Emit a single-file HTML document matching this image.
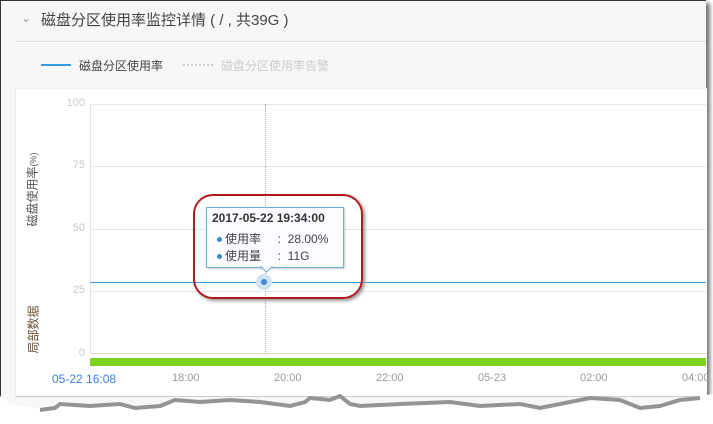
<!DOCTYPE html>
<html><head><meta charset="utf-8"><style>
body{margin:0;width:713px;height:424px;background:#fff;overflow:hidden;font-family:"Liberation Sans","Noto Sans CJK SC",sans-serif;position:relative}
.frame{position:absolute;left:0;top:0;width:705px;height:410px;background:#f7f7f7;border-left:1px solid #333;border-top:1px solid #333;box-shadow:4px 3px 4px #777}
.abs{position:absolute}
.t{font-size:13px;color:#444;white-space:nowrap}
.g{position:absolute;left:89px;width:616px;height:1px;background:#e6e6e6}
.yl{position:absolute;left:50px;width:34px;text-align:right;font-size:11px;color:#c8c8c8}
.xl{position:absolute;top:371px;font-size:11px;color:#999}
</style></head><body>
<div class="frame">
<div class="abs t" style="left:20px;top:10px;color:#999;font-size:12px">&#8964;</div>
<div class="abs t" style="left:40px;top:8px;font-size:15px;color:#444">磁盘分区使用率监控详情 ( / , 共39G )</div>
<div class="abs" style="left:14px;top:40px;width:691px;height:1px;background:#ddd"></div>
<div class="abs" style="left:40px;top:63px;width:30px;height:2px;background:#3a9ae0"></div>
<div class="abs t" style="left:78px;top:56px;font-size:12px;color:#444">磁盘分区使用率</div>
<div class="abs" style="left:182px;top:63px;width:30px;border-top:2px dotted #ccc"></div>
<div class="abs t" style="left:220px;top:56px;font-size:12px;color:#ccc">磁盘分区使用率告警</div>
<div class="abs" style="left:14px;top:87px;width:691px;height:307px;background:#fff;border-top:1px solid #eee;border-left:1px solid #eee;border-bottom:1px solid #ccc"></div>
<div class="g" style="top:103px"></div><div class="g" style="top:165px"></div><div class="g" style="top:228px"></div><div class="g" style="top:290px"></div><div class="g" style="top:352px;background:#ddd"></div>
<div class="abs" style="left:89px;top:103px;width:1px;height:250px;background:#e6e6e6"></div>
<div class="yl" style="top:96px">100</div><div class="yl" style="top:158px">75</div><div class="yl" style="top:221px">50</div><div class="yl" style="top:283px">25</div><div class="yl" style="top:346px">0</div>
<div class="abs t" style="left:-6px;top:180px;transform:rotate(-90deg);font-size:12px;color:#555">磁盘使用率<span style="font-size:9px">(%)</span></div>
<div class="abs t" style="left:8px;top:320px;transform:rotate(-90deg);font-size:12px;color:#6a5030">局部数据</div>
<div class="abs" style="left:264px;top:103px;height:250px;border-left:1px dotted #9ab"></div>
<div class="abs" style="left:89px;top:281px;width:616px;height:1px;background:#3a9ae0"></div>
<div class="abs" style="left:89px;top:357px;width:616px;height:8px;background:#7ed321"></div>
<div class="xl" style="left:51px;color:#3a7ef0;font-size:12px">05-22 16:08</div>
<div class="xl" style="left:171px">18:00</div><div class="xl" style="left:273px">20:00</div><div class="xl" style="left:375px">22:00</div><div class="xl" style="left:477px">05-23</div><div class="xl" style="left:579px">02:00</div><div class="xl" style="left:681px">04:00</div>
<div class="abs" style="left:255px;top:273px;width:16px;height:16px;border-radius:50%;background:#cfe3f5"></div>
<div class="abs" style="left:260px;top:278px;width:6px;height:6px;border-radius:50%;background:#3a8ad8"></div>
<div class="abs" style="left:205px;top:206px;width:136px;height:59px;background:#fafcff;border:1px solid #6ab0e8;box-shadow:1px 1px 2px #ccc"></div>
<div class="abs" style="left:261px;top:261px;width:8px;height:8px;background:#fafcff;border-right:1px solid #6ab0e8;border-bottom:1px solid #6ab0e8;transform:rotate(45deg)"></div>
<div class="abs t" style="left:211px;top:210px;font-weight:bold;font-size:12px;color:#333">2017-05-22 19:34:00</div>
<div class="abs t" style="left:216px;top:229px;font-size:12px;color:#444"><span style="display:inline-block;width:5px;height:5px;border-radius:50%;background:#3a8ad8;margin-right:3px;vertical-align:middle"></span>使用率&nbsp;&nbsp;&nbsp;&nbsp;&nbsp;:&nbsp; 28.00%</div>
<div class="abs t" style="left:216px;top:246px;font-size:12px;color:#444"><span style="display:inline-block;width:5px;height:5px;border-radius:50%;background:#3a8ad8;margin-right:3px;vertical-align:middle"></span>使用量&nbsp;&nbsp;&nbsp;&nbsp;&nbsp;:&nbsp; 11G</div>
<div class="abs" style="left:192px;top:193px;width:166px;height:101px;border:2px solid #b01c1c;border-radius:20px;box-shadow:2px 2px 3px #999"></div>
</div>
<svg class="abs" style="left:0;top:394px" width="713" height="30"><path d="M0 2 L6 6 L10 10 L20 12 L40 14 L55 12 L60 8 L90 10 L120 8 L135 12 L160 10 L175 4 L200 6 L230 4 L260 6 L290 10 L305 6 L310 2 L330 4 L340 0 L350 8 L360 10 L400 8 L450 6 L480 10 L520 8 L540 12 L560 8 L590 2 L620 4 L640 12 L660 10 L680 4 L700 2 L713 0 L713 30 L0 30Z" fill="#fff"/><path d="M40 16 L55 14 L60 10 L90 12 L120 10 L135 14 L160 12 L175 6 L200 8 L230 6 L260 8 L290 12 L305 8 L310 4 L330 6 L340 2 L350 10 L360 12 L400 10 L450 8 L480 12 L520 10 L540 14 L560 10 L590 4 L620 6 L640 14 L660 12 L680 6 L700 4" fill="none" stroke="#666" stroke-width="4" opacity="0.7"/></svg>
</body></html>
